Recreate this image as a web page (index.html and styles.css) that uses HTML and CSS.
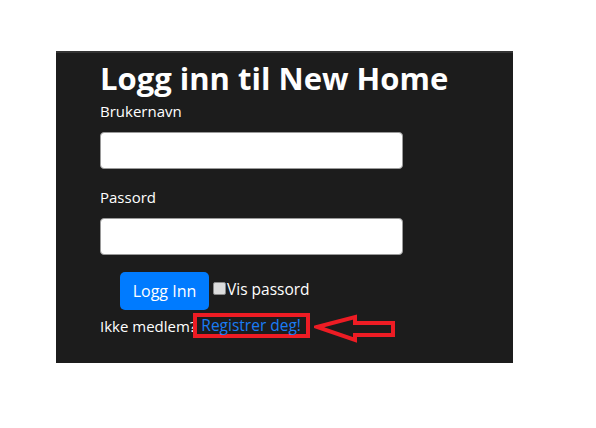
FILE: index.html
```html
<!DOCTYPE html>
<html lang="no">
<head>
<meta charset="utf-8">
<title>Logg inn</title>
<link rel="stylesheet" href="styles.css">
</head>
<body>
<div class="panel">
  <h1 class="title">Logg inn til New Home</h1>
  <label class="label">Brukernavn</label>
  <input class="field" type="text">
  <label class="label">Passord</label>
  <input class="field" type="password">
  <div class="actions">
    <button class="btn">Logg Inn</button>
    <span class="check"></span><span class="show">Vis passord</span>
  </div>
  <div class="signup">
    <span>Ikke medlem?</span>
    <span class="mark"><a class="link" href="#">Registrer deg!</a>
      <svg class="arrow" width="84" height="30" viewBox="0 0 84 30">
        <path d="M3 13 L41 3 L41 9 L79 9 L79 21 L41 21 L41 26 Z" fill="none" stroke="#ed1c24" stroke-width="4" stroke-linejoin="miter"/>
      </svg>
    </span>
  </div>
</div>
</body>
</html>
```

FILE: styles.css
```css
html, body {
  margin: 0;
  padding: 0;
  background: #ffffff;
}
body {
  font-family: "Open Sans", "Noto Sans", sans-serif;
}
.panel {
  margin: 51px 0 0 56px;
  width: 457px;
  height: 312px;
  box-sizing: border-box;
  background: #1c1c1c;
  border-top: 2px solid #333333;
  padding: 6px 0 0 44px;
  color: #ffffff;
  display: flex;
  flex-direction: column;
  align-items: flex-start;
}
.title {
  margin: 0;
  font-size: 31px;
  font-weight: 700;
  line-height: 38px;
  letter-spacing: 0;
}
.label {
  font-size: 15px;
  line-height: 20px;
  margin-top: 4px;
}
.field {
  margin: 11px 0 0 0;
  width: 303px;
  height: 37px;
  box-sizing: border-box;
  border: 1px solid #9a9a9a;
  border-radius: 4px;
  background: #ffffff;
  padding: 0;
}
.field + .label {
  margin-top: 18px;
}
.actions {
  margin: 17px 0 0 20px;
  display: flex;
  align-items: flex-start;
}
.btn {
  width: 89px;
  height: 38px;
  border: none;
  border-radius: 5px;
  background: #007bff;
  color: #ffffff;
  font-family: "Open Sans", "Noto Sans", sans-serif;
  font-size: 16px;
  padding: 0;
}
.check {
  width: 11px;
  height: 11px;
  margin: 10px 1px 0 4px;
  background: #dcdcdc;
  border: 1px solid #8a8a8a;
  border-radius: 2px;
}
.show {
  font-size: 15.5px;
  line-height: 20px;
  margin-top: 7px;
}
.signup {
  margin-top: 3px;
  display: flex;
  align-items: center;
  font-size: 15px;
}
.mark {
  position: relative;
  margin-left: -3px;
  border: 4px solid #ed1c24;
  padding: 0 5px 0 4px;
  line-height: 17px;
}
.link {
  color: #1a7cf5;
  text-decoration: none;
  font-size: 15.5px;
}
.arrow {
  position: absolute;
  left: 117px;
  top: -3px;
}
```
